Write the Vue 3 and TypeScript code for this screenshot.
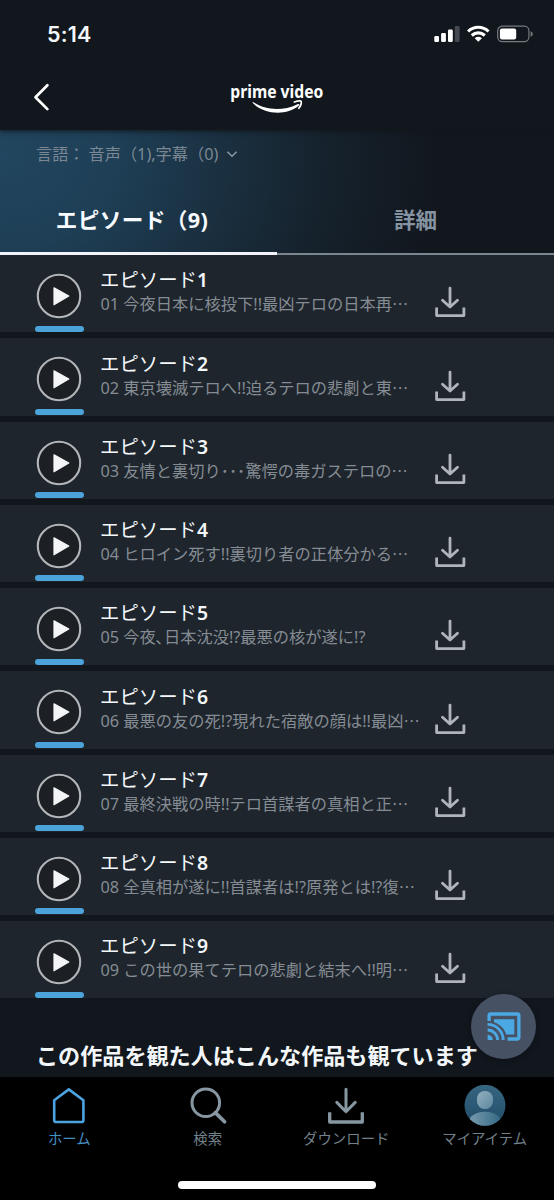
<script setup lang="ts">
interface Episode {
  title: string
  number: string
  summary: string
  clipped: boolean
}

const episodes: Episode[] = [
  { title: 'エピソード', number: '1', summary: '01 今夜日本に核投下!!最凶テロの日本再', clipped: true },
  { title: 'エピソード', number: '2', summary: '02 東京壊滅テロへ!!迫るテロの悲劇と東', clipped: true },
  { title: 'エピソード', number: '3', summary: '03 友情と裏切り･･･驚愕の毒ガステロの', clipped: true },
  { title: 'エピソード', number: '4', summary: '04 ヒロイン死す!!裏切り者の正体分かる', clipped: true },
  { title: 'エピソード', number: '5', summary: '05 今夜､日本沈没!?最悪の核が遂に!?', clipped: false },
  { title: 'エピソード', number: '6', summary: '06 最悪の友の死!?現れた宿敵の顔は!!最凶', clipped: true },
  { title: 'エピソード', number: '7', summary: '07 最終決戦の時!!テロ首謀者の真相と正', clipped: true },
  { title: 'エピソード', number: '8', summary: '08 全真相が遂に!!首謀者は!?原発とは!?復', clipped: true },
  { title: 'エピソード', number: '9', summary: '09 この世の果てテロの悲劇と結末へ!!明', clipped: true },
]
</script>

<template>
  <div class="screen" lang="ja">
    <header class="top">
      <div class="status">
        <span class="clock">5:14</span>
        <svg class="indicators" width="100" height="20" viewBox="0 0 100 20">
          <g fill="#fff">
            <rect x="0.3" y="11" width="4.7" height="6" rx="1.3" />
            <rect x="7.1" y="8" width="4.8" height="9" rx="1.3" />
            <rect x="14" y="4.6" width="4.8" height="12.4" rx="1.3" />
            <rect x="20.8" y="1" width="4.8" height="16" rx="1.3" fill="#444a50" />
          </g>
          <g fill="none" stroke="#fff" stroke-width="3.1">
            <path d="M34.1 6.5C39.8 0.9 48.8 0.9 54.5 6.5" />
            <path d="M37.8 10.5C41.5 7 47.1 7 50.8 10.5" />
          </g>
          <path d="M40.7 13.2Q44.3 10.3 47.9 13.2L44.3 16.8Z" fill="#fff" />
          <rect x="63.7" y="1.2" width="31.2" height="15.4" rx="4.6" fill="none" stroke="#757a7f" stroke-width="1.2" />
          <rect x="65.9" y="3.4" width="16.3" height="11" rx="2.2" fill="#fff" />
          <path d="M96.6 6.2Q98.8 7 98.8 9Q98.8 11 96.6 11.8Z" fill="#757a7f" />
        </svg>
      </div>
      <div class="titlebar">
        <svg class="back" width="20" height="30" viewBox="0 0 20 30">
          <path d="M14.4 3.3L2.5 15.2L14.4 27.1" fill="none" stroke="#fff" stroke-width="2.7" stroke-linecap="round" stroke-linejoin="round" />
        </svg>
        <svg class="logo" width="96" height="42" viewBox="0 -6 96 42">
          <text x="1.3" y="18.5" textLength="93" lengthAdjust="spacingAndGlyphs">prime video</text>
          <path d="M24.4 23.2C36 31.4 54 32.4 68.4 25.2C70 24.3 71.2 25.7 69.7 26.8C57 37.2 35 35.3 24 24.2C23.3 23.5 23.6 22.8 24.4 23.2Z" fill="#fff" />
          <path d="M65.3 23C69 21.7 71.8 21.7 72.2 22.4C72.6 24 71.6 26.9 69.9 29.3" fill="none" stroke="#fff" stroke-width="1.7" stroke-linecap="round" />
        </svg>
      </div>
    </header>

    <section class="hero">
      <div class="language">
        <span>言語：</span><span class="tracks">音声（1),字幕（0)</span>
        <svg width="12" height="8" viewBox="0 0 12 8">
          <path d="M1.4 1.7L6 6.2L10.6 1.7" fill="none" stroke="#8997a4" stroke-width="1.6" />
        </svg>
      </div>
      <nav class="tabs">
        <div class="tab active">エピソード（9)</div>
        <div class="tab">詳細</div>
      </nav>
    </section>

    <main class="episodes">
      <article v-for="episode in episodes" :key="episode.number" class="episode">
        <div class="player">
          <svg class="play" width="46" height="46" viewBox="0 0 46 46">
            <circle cx="23" cy="23" r="21.2" fill="#1c1f23" stroke="#b4b7ba" stroke-width="2.1" />
            <path d="M18 14.8L32.8 23L18 31.8Z" fill="#f4f5f6" stroke="#f4f5f6" stroke-width="1.2" stroke-linejoin="round" />
          </svg>
          <div class="progress"></div>
        </div>
        <div class="info">
          <h2>{{ episode.title }}<b>{{ episode.number }}</b></h2>
          <p>{{ episode.summary }}<span v-if="episode.clipped" class="more">…</span></p>
        </div>
        <svg class="download" width="32" height="32" viewBox="0 0 32 32">
          <g fill="none" stroke="#b0b5bb" stroke-width="2.8" stroke-linecap="round" stroke-linejoin="round">
            <path d="M16 2.1V20.8M8.5 14.2L16 21L23.5 14.2" />
            <path d="M2.6 21.6V29.6H29.9V21.6" stroke-linecap="butt" />
          </g>
        </svg>
      </article>
    </main>

    <section class="related">
      <h3>この作品を観た人はこんな作品も観ています</h3>
      <div class="cast">
        <svg width="34" height="30" viewBox="0 0 34 30">
          <g fill="none" stroke="#4ba8e3">
            <path d="M2.1 9V3.8Q2.1 2 3.9 2H30.1Q31.9 2 31.9 3.8V25.2Q31.9 27 30.1 27H20.6" stroke-width="3.3" />
            <path d="M.6 12.4A15.6 15.6 0 0 1 16.2 28" stroke-width="2.8" />
            <path d="M.6 18A10 10 0 0 1 10.6 28" stroke-width="2.8" />
          </g>
          <path d="M7 7.2H27.3V22.5H19.2C17.5 16.6 13 12.1 7 10.2Z" fill="#4ba8e3" />
          <path d="M.6 22.8A5.3 5.3 0 0 1 5.9 28H.6Z" fill="#4ba8e3" />
        </svg>
      </div>
    </section>

    <footer class="bottom">
      <div class="item current">
        <svg width="44" height="44" viewBox="0 0 44 44">
          <path d="M7.2 15.2L21.8 4.4L36.4 15.2V35.2Q36.4 37 34.6 37H9Q7.2 37 7.2 35.2Z" fill="none" stroke="#4ba3df" stroke-width="2.6" stroke-linejoin="round" />
        </svg>
        <span>ホーム</span>
      </div>
      <div class="item">
        <svg width="44" height="44" viewBox="0 0 44 44">
          <g fill="none" stroke="#8797a2" stroke-width="3">
            <circle cx="19.8" cy="17.8" r="13.8" />
            <path d="M29.3 27.6L38.6 36.8" stroke-width="3.7" stroke-linecap="round" />
          </g>
        </svg>
        <span>検索</span>
      </div>
      <div class="item">
        <svg width="44" height="44" viewBox="0 0 44 44">
          <g fill="none" stroke="#8797a2" stroke-width="3" stroke-linecap="round" stroke-linejoin="round">
            <path d="M22 4.3V26.5M12.8 17.4L22 26.7L31.2 17.4" />
            <path d="M5.7 27.3V37H38.3V27.3" stroke-width="3.3" stroke-linecap="butt" />
          </g>
        </svg>
        <span>ダウンロード</span>
      </div>
      <div class="item">
        <svg width="44" height="44" viewBox="0 0 44 44">
          <defs>
            <linearGradient id="avatar-bg" x1="0" y1="0" x2="0" y2="1">
              <stop offset="0" stop-color="#376681" /><stop offset="1" stop-color="#204b68" />
            </linearGradient>
            <linearGradient id="avatar-person" x1="0" y1="0" x2="1" y2="1">
              <stop offset="0" stop-color="#94afbf" /><stop offset="1" stop-color="#5d889f" />
            </linearGradient>
            <linearGradient id="avatar-body" x1="0" y1="0" x2="1" y2="0">
              <stop offset="0" stop-color="#789bae" /><stop offset="1" stop-color="#346985" />
            </linearGradient>
            <clipPath id="avatar-clip"><circle cx="22" cy="20.3" r="20.5" /></clipPath>
          </defs>
          <g clip-path="url(#avatar-clip)">
            <path d="M0-1H44V43H0Z" fill="url(#avatar-bg)" />
            <ellipse cx="22" cy="37" rx="16" ry="10.2" fill="url(#avatar-body)" />
            <rect x="14" y="5.9" width="16" height="18.2" rx="7.7" fill="url(#avatar-person)" />
          </g>
        </svg>
        <span>マイアイテム</span>
      </div>
      <div class="handle"></div>
    </footer>
  </div>
</template>

<style>
body {
  margin: 0;
  background: #000;
}
</style>

<style scoped>
.screen {
  width: 554px;
  height: 1200px;
  display: flex;
  flex-direction: column;
  overflow: hidden;
  background: #12171e;
  color: #f3f7fa;
  font-family: "Noto Sans", "Noto Sans CJK JP", sans-serif;
}
svg {
  display: block;
  flex: none;
}
.top {
  height: 130px;
  flex: none;
  background: #12171e;
  box-shadow: 0 1px 5px #10151b;
  z-index: 1;
}
.status {
  height: 68px;
  display: flex;
  justify-content: space-between;
  align-items: center;
  padding: 0 20px 0 47px;
  box-sizing: border-box;
}
.clock {
  font: 600 21.5px/26px Inter, sans-serif;
  letter-spacing: .2px;
}
.indicators {
  margin-top: 2px;
}
.titlebar {
  display: grid;
  grid-template-columns: 1fr 96px 1fr;
  align-items: start;
  padding: 14px 33px 0;
}
.logo {
  margin-top: -9.5px;
  overflow: visible;
}
.logo text {
  font: 700 17.3px "Noto Sans", sans-serif;
  fill: #fff;
}
.hero {
  height: 125px;
  flex: none;
  display: flex;
  flex-direction: column;
  justify-content: space-between;
  background: radial-gradient(ellipse 440px 350px at 0 25px, #22465f 0, #1e3f56 26%, #1a2f3f 52%, #15212b 76%, #12171e 100%);
}
.language {
  display: flex;
  align-items: center;
  height: 24px;
  margin: 12px 0 0 36px;
  color: #7b8894;
  font-size: 16.2px;
  line-height: 24px;
}
.tracks {
  margin: 0 8px 0 4px;
}
.tabs {
  display: flex;
}
.tab {
  width: 277px;
  height: 67px;
  box-sizing: border-box;
  border-bottom: 2px solid #79858f;
  text-align: center;
  color: #8594a1;
  font-size: 21.6px;
  font-weight: 700;
  line-height: 64px;
}
.tab.active {
  color: #f8fbff;
  border-bottom: 3px solid #f3f3fa;
  padding-right: 13px;
  letter-spacing: .4px;
}
.episodes {
  display: flex;
  flex-direction: column;
  flex: none;
  gap: 6px;
}
.episode {
  height: 77.25px;
  flex: none;
  display: flex;
  background: #1e252d;
}
.player {
  width: 49px;
  margin-left: 35px;
  padding-top: 18px;
  display: flex;
  flex-direction: column;
  align-items: center;
  gap: 6.5px;
}
.play {
  margin-right: 1px;
}
.progress {
  width: 49px;
  height: 6px;
  border-radius: 3px;
  background: #4ba3da;
}
.info {
  width: 351px;
  margin-left: 16px;
  padding-top: 11.4px;
  white-space: nowrap;
}
h2, h3, p {
  margin: 0;
}
h2 {
  font-size: 19.4px;
  line-height: 27px;
  font-weight: 400;
}
h2 b {
  font-weight: 600;
}
p {
  padding-left: .5px;
  color: #858c93;
  font-size: 16.25px;
  line-height: 22px;
}
.more {
  font-family: "Noto Sans CJK JP", sans-serif;
  line-height: 1;
}
.download {
  margin: 31.4px 0 0 -16.6px;
}
.related {
  display: flex;
  flex: 1;
  position: relative;
}
h3 {
  margin: 40px 0 0 36px;
  font-size: 22.1px;
  font-weight: 700;
  line-height: 34px;
  white-space: nowrap;
}
/* Floating cast button over the page content */
.cast {
  position: absolute;
  top: -4px;
  right: 18px;
  width: 65px;
  height: 65px;
  border-radius: 50%;
  display: flex;
  align-items: center;
  justify-content: center;
  background: #465164;
  box-shadow: 0 2px 6px #080c1270;
}
.bottom {
  height: 123px;
  flex: none;
  display: grid;
  grid-template-columns: repeat(4, 1fr);
  grid-template-rows: 104px 7px;
  background: #000;
}
.item {
  display: flex;
  flex-direction: column;
  align-items: center;
  padding-top: 8px;
  color: #71808b;
  font-size: 14.4px;
  line-height: 20px;
}
.current {
  color: #438fc3;
}
.handle {
  grid-column: 1 / -1;
  justify-self: center;
  width: 198px;
  height: 8px;
  border-radius: 4px;
  background: #fff;
}
</style>
